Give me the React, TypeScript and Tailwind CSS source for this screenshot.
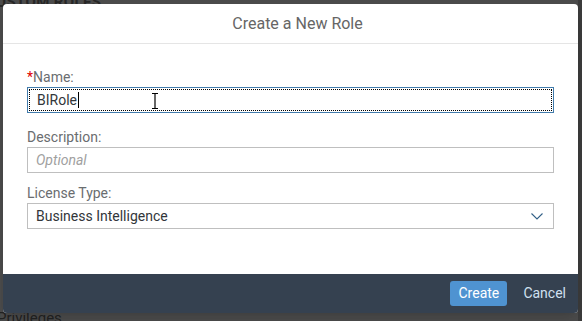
import React from "react";

const font = { fontFamily: "Roboto, 'Liberation Sans', sans-serif" };

const Field = ({
  label,
  required,
  className,
  children,
}: {
  label: string;
  required?: boolean;
  className?: string;
  children: React.ReactNode;
}) => (
  <div className={"flex flex-col " + (className ?? "")}>
    <label className="mb-px text-[14px] leading-[18px] text-[#6a6d70]">
      {required && <span className="text-[#e00000]">*</span>}
      {label}
    </label>
    {children}
  </div>
);

const App = () => {
  return (
    <div
      className="relative h-[321px] w-[582px] overflow-hidden bg-[#4b4b4b]"
      style={font}
    >
      {/* page behind the overlay */}
      <div className="absolute left-[-14px] top-[-9px] text-[15px] font-bold tracking-wide text-[#262626]">
        CUSTOM ROLES
      </div>
      <div className="absolute bottom-[-8px] left-[-3px] text-[15px] text-[#222]">
        Privileges
      </div>
      <div className="absolute right-0 top-0 h-full w-[4px] bg-[#3b3b3b]" />

      {/* dialog */}
      <div className="absolute left-[3px] top-[4px] flex h-[309px] w-[575px] flex-col overflow-hidden rounded-[4px] bg-white shadow-lg">
        <div className="flex h-[40px] shrink-0 items-center justify-center border-b border-[#e5e5e5] pl-[14px] text-[16px] text-[#666]">
          Create a New Role
        </div>

        <div className="flex flex-1 flex-col px-[24px] pt-[24px]">
          <Field label="Name:" required className="mb-[15px]">
            <div className="relative h-[26px] border border-[#427cac] bg-white">
              <div className="absolute inset-px flex items-center border border-dotted border-black pl-[7px] text-[14px] text-[#32363a]">
                BIRole
                <span className="ml-px inline-block h-[16px] w-px bg-black" />
              </div>
              {/* mouse I-beam */}
              <svg
                className="absolute left-[123px] top-[5px]"
                width="8"
                height="16"
                viewBox="0 0 8 16"
              >
                <path
                  d="M1 0.5h6M1 15.5h6M4 0.5v15"
                  stroke="#000"
                  strokeWidth="1.2"
                  fill="none"
                />
              </svg>
            </div>
          </Field>

          <Field label="Description:" className="mb-[11px]">
            <div className="flex h-[26px] items-center border border-[#bfbfbf] px-[8px] text-[14px] italic text-[#a0a0a0]">
              Optional
            </div>
          </Field>

          <Field label="License Type:">
            <div className="flex h-[26px] items-center justify-between border border-[#bfbfbf] pl-[8px] pr-[10px] text-[14px] text-[#32363a]">
              <span>Business Intelligence</span>
              <svg width="12" height="7" viewBox="0 0 12 7">
                <path
                  d="M0.5 0.5L6 6L11.5 0.5"
                  stroke="#346187"
                  strokeWidth="1.1"
                  fill="none"
                />
              </svg>
            </div>
          </Field>
        </div>

        <div className="flex h-[39px] shrink-0 items-center justify-end gap-[16px] bg-[#354150] pr-[12px]">
          <button className="h-[25px] w-[57px] rounded-[3px] bg-[#4f93d1] text-[14px] text-white">
            Create
          </button>
          <button className="text-[14px] text-[#d1e0f0]">Cancel</button>
        </div>
      </div>
    </div>
  );
};

export default App;
